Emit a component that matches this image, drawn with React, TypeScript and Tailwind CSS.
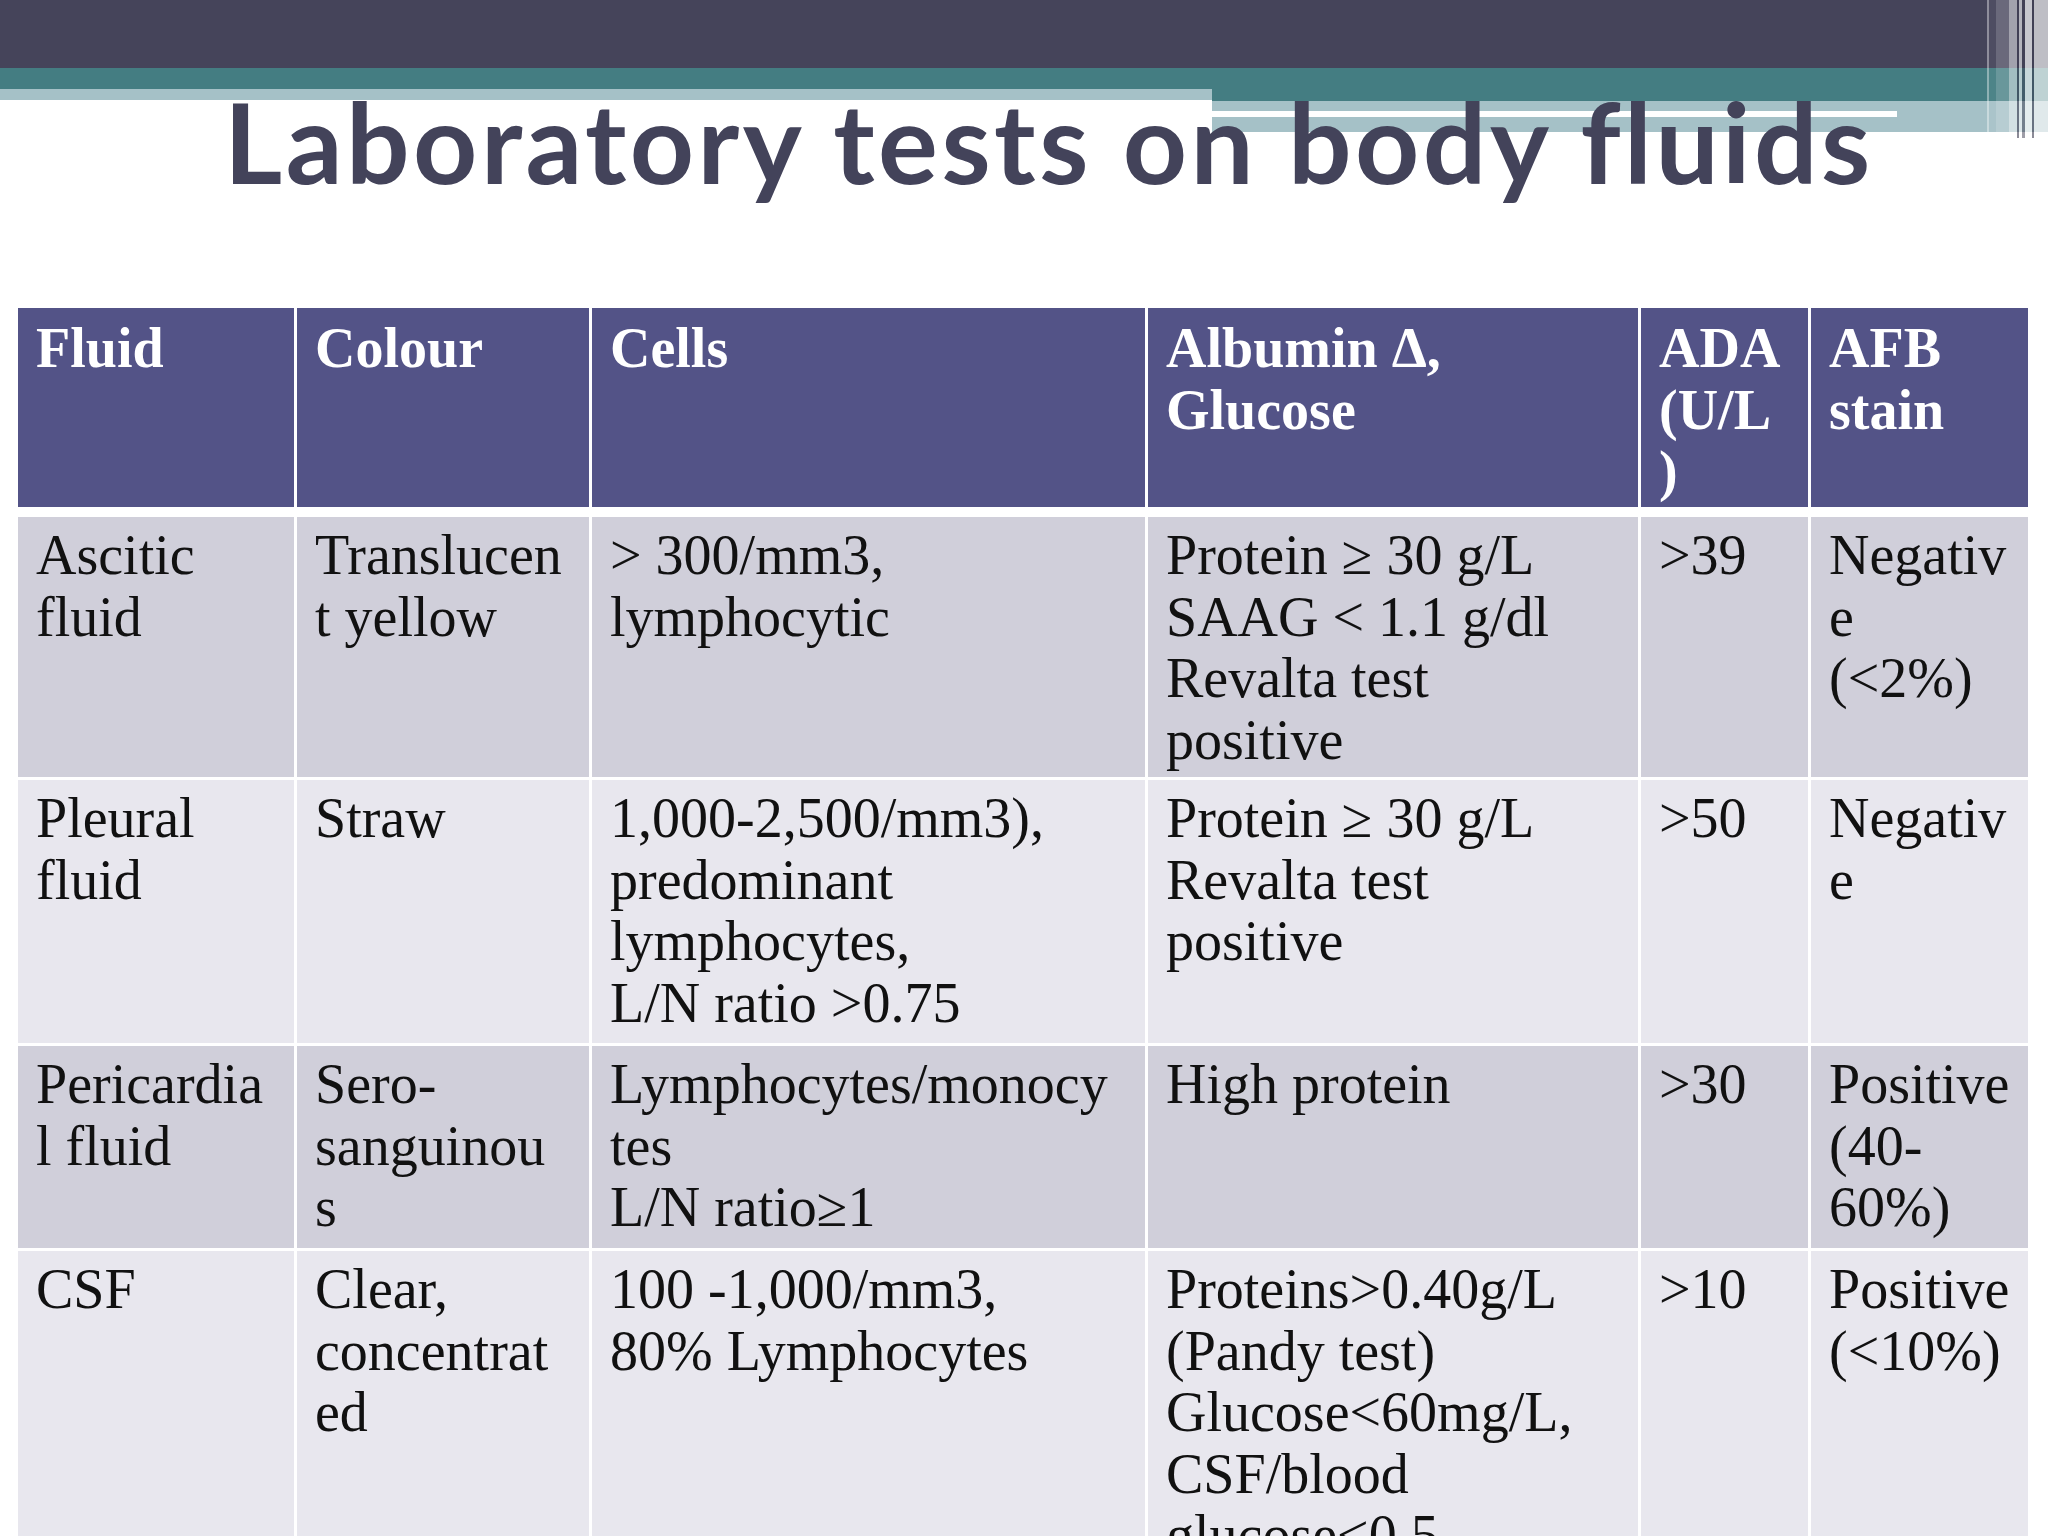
import React from 'react'

const cols = 'grid grid-cols-[276px_292px_553px_490px_167px_217px] gap-x-[3px]'

const header: string[][] = [
  ['Fluid'],
  ['Colour'],
  ['Cells'],
  ['Albumin Δ,', 'Glucose'],
  ['ADA', '(U/L', ')'],
  ['AFB', 'stain'],
]

const rows: { h: string; bg: string; cells: string[][] }[] = [
  {
    h: 'h-[260px]',
    bg: 'bg-[#d0cfda]',
    cells: [
      ['Ascitic', 'fluid'],
      ['Translucen', 't yellow'],
      ['> 300/mm3,', 'lymphocytic'],
      ['Protein ≥ 30 g/L', 'SAAG < 1.1 g/dl', 'Revalta test', 'positive'],
      ['>39'],
      ['Negativ', 'e', '(<2%)'],
    ],
  },
  {
    h: 'h-[263px]',
    bg: 'bg-[#e8e7ee]',
    cells: [
      ['Pleural', 'fluid'],
      ['Straw'],
      ['1,000-2,500/mm3),', 'predominant', 'lymphocytes,', 'L/N ratio >0.75'],
      ['Protein ≥ 30 g/L', 'Revalta test', 'positive'],
      ['>50'],
      ['Negativ', 'e'],
    ],
  },
  {
    h: 'h-[202px]',
    bg: 'bg-[#d0cfda]',
    cells: [
      ['Pericardia', 'l fluid'],
      ['Sero-', 'sanguinou', 's'],
      ['Lymphocytes/monocy', 'tes', 'L/N ratio≥1'],
      ['High protein'],
      ['>30'],
      ['Positive', '(40-', '60%)'],
    ],
  },
  {
    h: 'h-[320px]',
    bg: 'bg-[#e8e7ee]',
    cells: [
      ['CSF'],
      ['Clear,', 'concentrat', 'ed'],
      ['100 -1,000/mm3,', '80% Lymphocytes'],
      ['Proteins>0.40g/L', '(Pandy test)', 'Glucose<60mg/L,', 'CSF/blood', 'glucose<0.5'],
      ['>10'],
      ['Positive', '(<10%)'],
    ],
  },
]

function Lines({ lines }: { lines: string[] }) {
  return (
    <>
      {lines.map((l, i) => (
        <div key={i} className="whitespace-nowrap">{l}</div>
      ))}
    </>
  )
}

export default function App() {
  return (
    <div className="w-[2048px] h-[1536px] overflow-hidden bg-white relative">
      {/* top banner */}
      <div className="h-[308px]">
        <div className="h-[68px] bg-[#45445a]" />
        <div className="flex">
          <div className="w-[1212px] flex flex-col">
            <div className="h-[21px] bg-[#447d82]" />
            <div className="h-[11px] bg-[#a5c1c7]" />
          </div>
          <div className="flex-1 flex flex-col">
            <div className="h-[33px] bg-[#447d82]" />
            <div className="h-[10px] bg-[#a5c1c7]" />
            <div className="flex h-[6px]">
              <div className="w-[685px] bg-white" />
              <div className="flex-1 bg-[#a5c1c7]" />
            </div>
            <div className="h-[15px] bg-[#a5c1c7]" />
          </div>
        </div>
        <h1 className="relative z-10 -mt-[47px] pl-[224px] text-[112px] leading-none font-bold tracking-[3.5px] text-[#43435a] font-['Lato','Open_Sans',sans-serif] whitespace-nowrap">
          Laboratory tests on body fluids
        </h1>
      </div>

      {/* right edge stripes */}
      <div className="absolute top-0 right-0 flex items-start">
        <div className="w-[2px] h-[132px] bg-white/40" />
        <div className="w-[7px] h-[132px] bg-white/5" />
        <div className="w-[13px] h-[132px] bg-white/20" />
        <div className="w-[8px] h-[138px] bg-white/50" />
        <div className="w-[2px] h-[138px] bg-[#3f3e52]/60" />
        <div className="w-[3px] h-[138px] bg-white/60" />
        <div className="w-[3px] h-[138px] bg-[#3f3e52]/50" />
        <div className="w-[7px] h-[138px] bg-white/70" />
        <div className="w-[2px] h-[138px] bg-[#3f3e52]/60" />
        <div className="w-[14px] h-[138px] bg-white/65" />
      </div>

      {/* table */}
      <div className="ml-[18px] w-[2010px] flex flex-col font-['Liberation_Serif','Times_New_Roman',serif] text-[56px] leading-[61.5px]">
        <div className={`${cols} h-[199px]`}>
          {header.map((c, i) => (
            <div key={i} className="bg-[#535387] text-white font-bold pl-[18px] pt-[10px]">
              <Lines lines={c} />
            </div>
          ))}
        </div>
        {rows.map((r, ri) => (
          <div key={ri} className={`${cols} ${r.h} ${ri === 0 ? 'mt-[10px]' : 'mt-[3px]'}`}>
            {r.cells.map((c, i) => (
              <div key={i} className={`${r.bg} text-[#111] pl-[18px] pt-[8px] overflow-hidden`}>
                <Lines lines={c} />
              </div>
            ))}
          </div>
        ))}
      </div>
    </div>
  )
}
